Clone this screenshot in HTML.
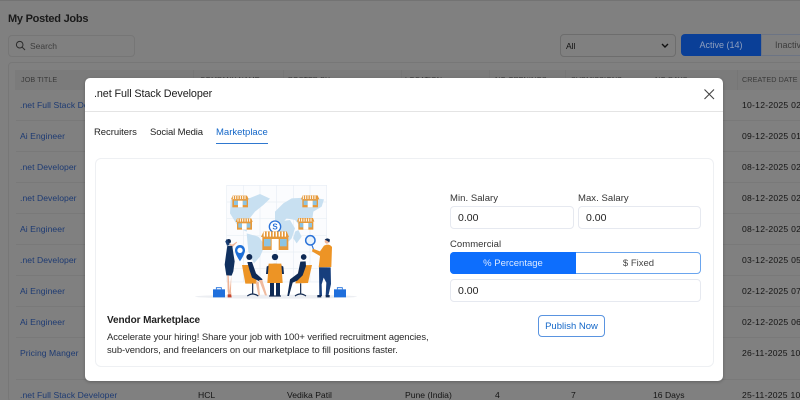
<!DOCTYPE html>
<html><head><meta charset="utf-8">
<style>
*{box-sizing:border-box;margin:0;padding:0}
html,body{width:800px;height:400px;overflow:hidden}
body{background:#808080;font-family:"Liberation Sans",sans-serif;position:relative}
.a{position:absolute;white-space:nowrap}
.l{color:#1d3a72;font-size:8.6px;left:20px;letter-spacing:.05px}
.d{color:#141414;font-size:8.6px;left:742px;letter-spacing:.25px}
.h{height:1px;background:#797979;left:16px;width:784px}
.t{font-size:8.6px;color:#141414;top:390px}
.hd{font-size:7.2px;color:#3a3a3a;top:75px;letter-spacing:.1px}
.v{width:1px;height:20px;background:#767676;top:70px}
.in{border:1px solid #e6e9f0;border-radius:4px;background:#fff;color:#222;font-size:10.5px;line-height:23px;padding-left:7px;height:23px}
.lab{font-size:9.5px;color:#333;letter-spacing:.05px}
</style></head><body>
<div class="a" style="left:0;top:0;width:800px;height:1px;background:#737373"></div>
<div class="a" style="left:8px;top:13px;font-size:11px;font-weight:bold;color:#1a1a1a;letter-spacing:-.25px">My Posted Jobs</div>
<div class="a" style="left:8px;top:35px;width:127px;height:22px;border:1px solid #767676;border-radius:4px"></div>
<svg class="a" style="left:15px;top:40px" width="11" height="11" viewBox="0 0 11 11" fill="none" stroke="#2a2a2a" stroke-width="1"><circle cx="4.7" cy="4.7" r="3.3"/><path d="M7.2 7.2L10 10"/></svg>
<div class="a" style="left:30px;top:41px;font-size:8.5px;color:#3d3d3d">Search</div>
<div class="a" style="left:560px;top:34px;width:116px;height:23px;border:1px solid #6d6d6d;border-radius:4px"></div>
<div class="a" style="left:566px;top:41px;font-size:8.5px;color:#111">All</div>
<svg class="a" style="left:661px;top:43px" width="8" height="6" viewBox="0 0 8 6" fill="none" stroke="#111" stroke-width="1.4"><path d="M1 1l3 3 3-3"/></svg>
<div class="a" style="left:681px;top:34px;width:80px;height:22px;background:#0a3f97;border-radius:4px 0 0 4px;color:#8f9fbe;font-size:9px;line-height:22px;text-align:center">Active (14)</div>
<div class="a" style="left:761px;top:34px;width:45px;height:22px;border:1px solid #6c7484;color:#3c3c3c;font-size:9px;line-height:20px;padding-left:13px">Inactive</div>
<div class="a" style="left:8px;top:62px;width:800px;height:340px;border:1px solid #777;border-radius:4px"></div>
<div class="a" style="left:15px;top:70px;width:785px;height:20px;background:#7b7b7b"></div>
<div class="a hd" style="left:21px">JOB TITLE</div>
<div class="a hd" style="left:200px">COMPANY NAME</div>
<div class="a hd" style="left:288px">POSTED BY</div>
<div class="a hd" style="left:405px">LOCATION</div>
<div class="a hd" style="left:495px">NO OPENINGS</div>
<div class="a hd" style="left:571px">SUBMISSIONS</div>
<div class="a hd" style="left:655px">NO DAYS</div>
<div class="a hd" style="left:742px">CREATED DATE ⌄</div>
<div class="a v" style="left:193px"></div><div class="a v" style="left:283px"></div><div class="a v" style="left:401px"></div><div class="a v" style="left:489px"></div><div class="a v" style="left:565px"></div><div class="a v" style="left:737px"></div>
<div class="a l" style="top:100px">.net Full Stack Developer</div><div class="a d" style="top:100px">10-12-2025 02:30</div>
<div class="a h" style="top:120px"></div>
<div class="a l" style="top:131px">Ai Engineer</div><div class="a d" style="top:131px">09-12-2025 01:30</div>
<div class="a h" style="top:151px"></div>
<div class="a l" style="top:162px">.net Developer</div><div class="a d" style="top:162px">08-12-2025 02:30</div>
<div class="a h" style="top:182px"></div>
<div class="a l" style="top:193px">.net Developer</div><div class="a d" style="top:193px">08-12-2025 02:30</div>
<div class="a h" style="top:213px"></div>
<div class="a l" style="top:224px">Ai Engineer</div><div class="a d" style="top:224px">08-12-2025 02:30</div>
<div class="a h" style="top:244px"></div>
<div class="a l" style="top:255px">.net Developer</div><div class="a d" style="top:255px">03-12-2025 05:30</div>
<div class="a h" style="top:275px"></div>
<div class="a l" style="top:286px">Ai Engineer</div><div class="a d" style="top:286px">02-12-2025 07:30</div>
<div class="a h" style="top:306px"></div>
<div class="a l" style="top:317px">Ai Engineer</div><div class="a d" style="top:317px">02-12-2025 06:30</div>
<div class="a h" style="top:337px"></div>
<div class="a l" style="top:348px">Pricing Manger</div><div class="a d" style="top:348px">26-11-2025 10:30</div>
<div class="a h" style="top:379px"></div>
<div class="a l" style="top:390px">.net Full Stack Developer</div><div class="a d" style="top:390px">25-11-2025 10:30</div>
<div class="a t" style="left:198px">HCL</div>
<div class="a t" style="left:287px">Vedika Patil</div>
<div class="a t" style="left:405px">Pune (India)</div>
<div class="a t" style="left:495px">4</div>
<div class="a t" style="left:571px">7</div>
<div class="a t" style="left:653px">16 Days</div>

<div class="a" style="left:85px;top:78px;width:638px;height:303px;background:#fff;border-radius:5px;box-shadow:0 1px 3px rgba(0,0,0,.25)"></div>
<div class="a" style="left:85px;top:111px;width:638px;height:1px;background:#e4e4e4"></div>
<div class="a" style="left:94px;top:88px;font-size:10.8px;color:#1c1c1c;letter-spacing:-.1px">.net Full Stack Developer</div>
<svg class="a" style="left:702px;top:87px" width="14" height="14" viewBox="0 0 14 14" fill="none" stroke="#444" stroke-width="1.1"><path d="M2.5 2.5l9.5 9.5M12 2.500L2.500 12"/></svg>
<div class="a" style="left:94px;top:127px;font-size:9.5px;color:#222;letter-spacing:-.05px">Recruiters</div>
<div class="a" style="left:150px;top:127px;font-size:9.5px;color:#222;letter-spacing:-.12px">Social Media</div>
<div class="a" style="left:216px;top:127px;font-size:9.5px;color:#1467c8">Marketplace</div>
<div class="a" style="left:216px;top:143px;width:52px;height:1px;background:#2f78cf"></div>
<div class="a" style="left:95px;top:158px;width:619px;height:209px;border:1px solid #eef0f3;border-radius:6px"></div>

<svg class="a" style="left:180px;top:170px" width="190" height="135" viewBox="0 0 570 405">
<rect x="140" y="46" width="300" height="290" fill="#fbfcfe" stroke="#e8eef5" stroke-width="2"/>
<path d="M140 96H440M140 146H440M140 196H440M140 246H440M140 296H440M190 46V336M240 46V336M290 46V336M340 46V336M390 46V336" stroke="#e8eef5" stroke-width="2" fill="none"/>
<path d="M152 90L210 84 240 72 270 86 250 105 225 125 205 150 200 185 178 175 150 130Z" fill="#c8e0f1"/>
<path d="M200 190L235 200 255 225 240 260 222 280 205 245Z" fill="#c8e0f1"/>
<path d="M285 125L310 100 335 85 390 82 432 88 425 110 400 125 395 160 370 180 345 150 320 145 305 160 285 150Z" fill="#c8e0f1"/>
<path d="M290 155L330 150 345 175 335 205 315 225 300 200 285 180Z" fill="#c8e0f1"/>
<path d="M345 185L355 180 365 200 350 220 340 205Z" fill="#c8e0f1"/>
<g><rect x="157" y="88" width="47" height="24" fill="#e6993a"/><rect x="162" y="92" width="12" height="13" fill="#8cc4e3"/><rect x="188" y="92" width="12" height="13" fill="#8cc4e3"/><rect x="174" y="92" width="14" height="20" fill="#fff"/><path d="M153 88l5-11h43l5 11z" fill="#e6993a"/><path d="M160 78v9M167 78v9M174 78v9M181 78v9M188 78v9M195 78v9" stroke="#fff" stroke-width="3"/></g>
<g><rect x="367" y="88" width="47" height="24" fill="#e6993a"/><rect x="371" y="92" width="12" height="13" fill="#8cc4e3"/><rect x="398" y="92" width="12" height="13" fill="#8cc4e3"/><rect x="383" y="92" width="15" height="20" fill="#fff"/><path d="M363 88l5-12h45l5 12z" fill="#e6993a"/><path d="M370 77v10M377 77v10M384 77v10M391 77v10M398 77v10M405 77v10" stroke="#fff" stroke-width="3"/></g>
<g><rect x="171" y="156" width="45" height="23" fill="#e6993a"/><rect x="175" y="160" width="11" height="13" fill="#8cc4e3"/><rect x="200" y="160" width="11" height="13" fill="#8cc4e3"/><rect x="186" y="160" width="14" height="19" fill="#fff"/><path d="M167 156l4-11h43l4 11z" fill="#e6993a"/><path d="M174 146v9M181 146v9M188 146v9M195 146v9M202 146v9M209 146v9" stroke="#fff" stroke-width="3"/></g>
<g><rect x="355" y="155" width="45" height="24" fill="#e6993a"/><rect x="359" y="159" width="11" height="13" fill="#8cc4e3"/><rect x="385" y="159" width="11" height="13" fill="#8cc4e3"/><rect x="370" y="159" width="15" height="20" fill="#fff"/><path d="M351 155l4-11h44l4 11z" fill="#e6993a"/><path d="M358 145v9M365 145v9M372 145v9M379 145v9M386 145v9M393 145v9" stroke="#fff" stroke-width="3"/></g>
<circle cx="285" cy="170" r="17" fill="#fff" stroke="#2a72d8" stroke-width="4"/>
<text x="285" y="179" text-anchor="middle" font-family="Liberation Sans,sans-serif" font-weight="bold" font-size="24" fill="#2a72d8">S</text>
<rect x="247" y="199" width="78" height="41" fill="#e6993a"/><rect x="252" y="207" width="20" height="22" fill="#8cc4e3"/><rect x="300" y="207" width="20" height="22" fill="#8cc4e3"/><rect x="275" y="207" width="21" height="33" fill="#fff"/>
<path d="M243 201l8-17h69l7 17z" fill="#e6993a"/><path d="M253 185v15M262 185v15M271 185v15M280 185v15M289 185v15M298 185v15M307 185v15M316 185v15" stroke="#fff" stroke-width="4"/>
<ellipse cx="288" cy="380" rx="243" ry="6" fill="#eceef2"/>
<rect x="99" y="358" width="36" height="24" fill="#1f6fdc"/><path d="M109 358v-5h15v5" fill="none" stroke="#1f6fdc" stroke-width="2.5"/>
<rect x="462" y="358" width="36" height="24" fill="#1f6fdc"/><path d="M472 358v-5h15v5" fill="none" stroke="#1f6fdc" stroke-width="2.5"/>
<!-- woman -->
<path d="M180 225a15 15 0 0 1 15 16c0 11-15 33-15 33s-15-22-15-33a15 15 0 0 1 15-16z" fill="#1e6fd8"/><circle cx="180" cy="241" r="8" fill="#fff"/>
<circle cx="146" cy="214" r="7" fill="#0f2a55"/><path d="M140 207l-4 8 5 12 8-3z" fill="#1a3f74"/>
<path d="M148 218l5 5 5 0 12-8 1 3-12 12-6 2z" fill="#f1b79b"/>
<path d="M142 227l15 1 3 22 4 24-4 30-5 13-16-1-5-32 4-30z" fill="#10305f"/>
<path d="M146 316l3 48 2 15h-5l-3-15-1-48zM154 316l-1 48 2 15h-3l-3-15z" fill="#efb395"/><path d="M143 373l10 0 2 9h-12z" fill="#c5452f"/>
<!-- left seated -->
<path d="M186 285l30 0 16 56-36 0z" fill="#ed9425"/>
<circle cx="208" cy="261" r="9" fill="#0f2a55"/><path d="M202 276h14l12 34 20 18-8 7-24-12-8-24z" fill="#0f2a55"/><path d="M237 330l10 0 14 46h-6zM227 335l9 0 4 41h-5z" fill="#f0bb9f"/>
<path d="M218 340v30M202 378q16-12 33 0" stroke="#12294f" stroke-width="3.5" fill="none"/>
<!-- center seated -->
<circle cx="285" cy="261" r="9.5" fill="#0f2a55"/><path d="M260 290q25-18 50 0l2 22h-8l-38 0h-8z" fill="#0f2a55"/>
<path d="M266 281l38 0 4 58h-46z" fill="#ed9425"/><path d="M270 339h12v39h-12zM288 339h12v39h-12z" fill="#0f2a55"/>
<path d="M267 378h36" stroke="#12294f" stroke-width="3.5"/>
<!-- right seated -->
<path d="M360 286l36-1-12 54-38 1z" fill="#ed9425"/>
<circle cx="371" cy="261" r="8.5" fill="#0f2a55"/><path d="M361 275l16-1 1 14-10 28-16 16-14 6-11 40h-5l8-50 24-18z" fill="#0f2a55"/>
<path d="M362 340v30M345 378q16-12 33 0" stroke="#12294f" stroke-width="3.5" fill="none"/>
<!-- man -->
<circle cx="391" cy="211" r="14" fill="#eaf3fb" stroke="#2a72d8" stroke-width="4.5"/><path d="M396 226l5 13" stroke="#2a72d8" stroke-width="3.5"/>
<circle cx="441" cy="214" r="7" fill="#f1b79b"/><path d="M434 209q8-8 16 0l-2 8-6-4z" fill="#0f2a55"/>
<path d="M398 236l22 8 12-17q16-8 24 4l-2 60-38 1 4-34-24-14z" fill="#ed9425"/>
<path d="M417 292h35l1 50-8 36h-8l2-40-8-15-6 20 1 35h-8z" fill="#173f7d"/>
<path d="M412 375h12v7h-12zM437 375h12v7h-12z" fill="#0f2a55"/>
</svg>

<div class="a" style="left:107px;top:315px;font-size:10px;font-weight:bold;color:#222;letter-spacing:-.08px">Vendor Marketplace</div>
<div class="a" style="left:107px;top:332px;font-size:9.45px;color:#2a2a2a;letter-spacing:-.07px">Accelerate your hiring! Share your job with 100+ verified recruitment agencies,</div>
<div class="a" style="left:107px;top:345px;font-size:9.45px;color:#2a2a2a;letter-spacing:-.07px">sub-vendors, and freelancers on our marketplace to fill positions faster.</div>

<div class="a lab" style="left:450px;top:193px">Min. Salary</div>
<div class="a lab" style="left:578px;top:193px">Max. Salary</div>
<div class="a in" style="left:450px;top:206px;width:124px">0.00</div>
<div class="a in" style="left:578px;top:206px;width:123px">0.00</div>
<div class="a lab" style="left:450px;top:239px">Commercial</div>
<div class="a" style="left:450px;top:252px;width:251px;height:22px;border:1px solid #6aa5ee;border-radius:4px"></div>
<div class="a" style="left:450px;top:252px;width:126px;height:22px;background:#0d6efd;border-radius:4px 0 0 4px;color:#dbe9ff;font-size:9.5px;line-height:23px;text-align:center">% Percentage</div>
<div class="a" style="left:576px;top:252px;width:125px;height:22px;color:#444;font-size:9.5px;line-height:23px;text-align:center">$ Fixed</div>
<div class="a in" style="left:450px;top:279px;width:251px">0.00</div>
<div class="a" style="left:538px;top:315px;width:67px;height:22px;border:1px solid #5a94e0;border-radius:4px;color:#1467c8;font-size:9.5px;line-height:21px;text-align:center">Publish Now</div>
</body></html>
